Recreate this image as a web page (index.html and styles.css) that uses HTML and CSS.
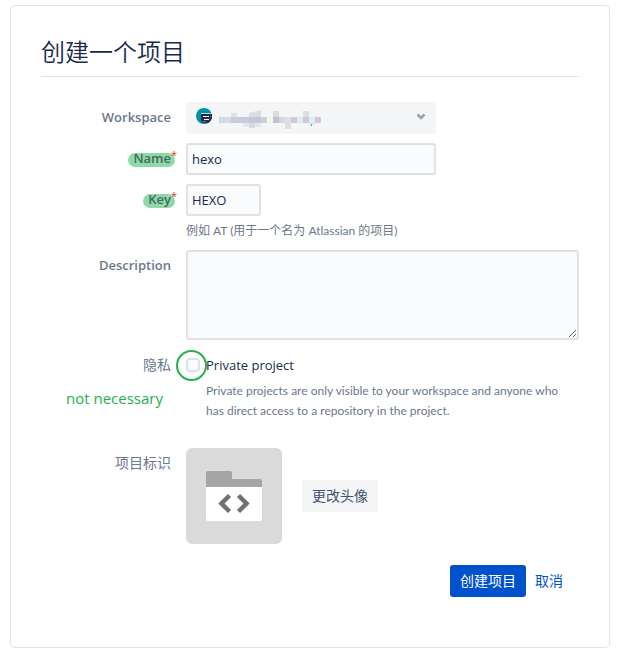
FILE: index.html
```html
<!DOCTYPE html>
<html lang="zh-CN">
<head>
<meta charset="utf-8">
<meta name="viewport" content="width=device-width, initial-scale=1">
<title>创建一个项目</title>
<link rel="stylesheet" href="styles.css">
</head>
<body>
<main class="card">
  <h1 class="title">创建一个项目</h1>
  <form class="form">
    <div class="row">
      <label class="label" for="workspace">Workspace</label>
      <div class="select-wrap">
        <select id="workspace" class="select"><option></option></select>
        <svg class="workspace" width="126" height="24" viewBox="0 0 126 24" aria-hidden="true">
          <circle cx="8" cy="9" r="8" fill="#0092a8"/>
          <path d="M5 6h11v4a8 8 0 0 1-4 6H7l-2-3z" fill="#1d2b50"/>
          <path d="M5 6h11v1H5z" fill="#c8d4e0"/>
          <path d="M7 9h6v1H7zM8 12h5v1H8z" fill="#fff"/>
          <path d="M14 9h1v1h-1zM7 14h3v1H7z" fill="#e0526b"/>
          <path d="M23 10h12v6H23z" fill="#d0dbea"/>
          <path d="M35 6h6v4h-6z" fill="#dde1ea"/>
          <path d="M35 10h12v6H35z" fill="#cbcbd6"/>
          <path d="M47 10h6v6h-6z" fill="#cbcbe0"/>
          <path d="M53 6l12-3v7H53z" fill="#dcdce2"/>
          <path d="M53 10h12v6H53z" fill="#c9c6d4"/>
          <path d="M65 10h6v6h-6z" fill="#c9d0da"/>
          <path d="M47 16h6v4h-6zM59 16h6v4h-6z" fill="#e8e4ec"/>
          <path d="M53 16h6v5h-6z" fill="#d3d8e7"/>
          <path d="M71 10h6v6h-6z" fill="#f3f5e8"/>
          <path d="M77 4h6v6h-6z" fill="#dcdce0"/>
          <path d="M77 10h6v6h-6z" fill="#b9c5d1"/>
          <path d="M83 10h6v6h-6z" fill="#d3d5df"/>
          <path d="M89 10h6v12h-6z" fill="#dfdde2"/>
          <path d="M95 10h6v6h-6z" fill="#cbcbd6"/>
          <path d="M101 10h6v6h-6z" fill="#deebf5"/>
          <path d="M107 4h6v6h-6z" fill="#dfdde4"/>
          <path d="M107 10h6v6h-6z" fill="#cbcbd6"/>
          <path d="M113 10h6v8h-6z" fill="#deebf5"/>
          <path d="M115 17h1v2h-1z" fill="#5f9a94"/>
          <path d="M119 10h6v6h-6z" fill="#cbcbd6"/>
        </svg>
        <svg class="chevron" width="10" height="8" viewBox="0 0 10 8" aria-hidden="true"><path d="M1.500 1.500L5 5l3.500-3.500" fill="none" stroke="#97a0af" stroke-width="2.500"/></svg>
      </div>
    </div>
    <div class="row">
      <label class="label" for="name"><span class="mark">Name</span><span class="required">*</span></label>
      <input id="name" class="field medium" type="text" value="hexo">
    </div>
    <div class="row">
      <label class="label" for="key"><span class="mark">Key</span><span class="required">*</span></label>
      <div>
        <input id="key" class="field short" type="text" value="HEXO">
        <p class="hint">例如 AT (用于一个名为 Atlassian 的项目)</p>
      </div>
    </div>
    <div class="row">
      <label class="label" for="description">Description</label>
      <textarea id="description" class="field area"></textarea>
    </div>
    <div class="row privacy">
      <div class="label plain">隐私<span class="note">not necessary</span></div>
      <div class="check">
        <span class="check-box"><input id="private" class="checkbox" type="checkbox"><span class="ring"></span></span>
        <div>
          <label class="check-label" for="private">Private project</label>
          <p class="help">Private projects are only visible to your workspace and anyone who has direct access to a repository in the project.</p>
        </div>
      </div>
    </div>
    <div class="row identity">
      <div class="label plain">项目标识</div>
      <div class="avatar-row">
        <svg class="avatar" width="96" height="96" viewBox="0 0 96 96" role="img" aria-label="项目标识">
          <rect width="96" height="96" rx="6" fill="#dadada"/>
          <path d="M20 39V25q0-2 2-2h22q2 0 2 2v6h28q2 0 2 2v6z" fill="#a5a5a5"/>
          <path d="M20 39h56v32q0 2-2 2H22q-2 0-2-2z" fill="#fff"/>
          <path d="M43.500 47.500L35.500 55.500l8 8M52.500 47.500l8 8-8 8" fill="none" stroke="#707070" stroke-width="4.500"/>
        </svg>
        <button class="button" type="button">更改头像</button>
      </div>
    </div>
    <div class="actions">
      <button class="button primary" type="submit">创建项目</button>
      <a class="cancel" href="#">取消</a>
    </div>
  </form>
</main>
</body>
</html>
```
FILE: styles.css
```css
* { box-sizing: border-box; }

body {
  margin: 0;
  padding: 5px 12px 6px 10px;
  background: #fff;
  color: #172b4d;
  font: 14px/20px "Open Sans", "Noto Sans CJK SC", sans-serif;
}

p { margin: 0; }

.card {
  padding: 30px 30px 50px;
  border: 1px solid #dfe1e6;
  border-radius: 5px;
}

.title {
  margin: 0;
  padding-bottom: 8px;
  border-bottom: 1px solid #dfe1e6;
  font-size: 24px;
  line-height: 32px;
  font-weight: 350;
}

.form {
  display: flex;
  flex-direction: column;
  gap: 9px;
  padding-top: 25px;
}

.row {
  display: grid;
  grid-template-columns: 130px minmax(0, 1fr);
  column-gap: 15px;
}

.label {
  position: relative;
  padding-top: 5px;
  color: #6b778c;
  font-size: 13px;
  font-weight: 600;
  text-align: right;
}

.plain {
  font-size: 14px;
  font-weight: 400;
}

.mark {
  display: inline-block;
  position: relative;
  z-index: 0;
  margin-right: -4px;
  padding: 0 4px 0 5px;
  color: #42695f;
}

.mark::before {
  content: "";
  position: absolute;
  inset: 5px 0 1px;
  z-index: -1;
  border-radius: 7px;
  background: #8fd9a8;
}

.required {
  position: absolute;
  top: 2px;
  left: 100%;
  color: #de350b;
  font-size: 11px;
  font-weight: 400;
}

.select-wrap {
  position: relative;
  max-width: 250px;
}

.select {
  display: block;
  width: 100%;
  height: 32px;
  border: 0;
  border-radius: 3px;
  appearance: none;
  background: #f4f5f7;
}

.workspace {
  position: absolute;
  top: 5px;
  left: 10px;
  pointer-events: none;
}

.chevron {
  position: absolute;
  top: 11px;
  right: 10px;
  pointer-events: none;
}

.field {
  display: block;
  width: 100%;
  height: 32px;
  margin: 0;
  padding: 3px 4px;
  border: 2px solid #dfe1e6;
  border-radius: 3px;
  background: #fafbfc;
  color: #172b4d;
  font: inherit;
  font-size: 13px;
}

.medium { max-width: 250px; }
.short { max-width: 75px; }
.area { height: 90px; }

.hint,
.help {
  color: #6b778c;
  font-family: Lato, "Noto Sans CJK SC", sans-serif;
  font-size: 12px;
}

.hint { padding-top: 5px; }
.help { padding-top: 6px; }

.privacy { padding-top: 1px; }

.note {
  position: absolute;
  top: 38px;
  right: 8px;
  color: #22b14c;
  font-size: 15px;
  white-space: nowrap;
}

.check {
  display: flex;
  gap: 6px;
  padding-top: 5px;
}

.check-box {
  position: relative;
  flex: none;
  height: 14px;
  margin-top: 3px;
}

.check-label {
  display: block;
  font-size: 13px;
}

.checkbox {
  display: block;
  width: 14px;
  height: 14px;
  margin: 0;
  border: 2px solid #dfe1e6;
  border-radius: 4px;
  appearance: none;
  background: #fafbfc;
}

.ring {
  position: absolute;
  inset: -8px -7px -9px -10px;
  border: 2px solid #22b14c;
  border-radius: 50%;
  pointer-events: none;
}

.identity { padding-top: 18px; }

.avatar-row {
  display: flex;
  align-items: center;
  gap: 20px;
}

.button {
  height: 32px;
  padding: 0 10px;
  border: 0;
  border-radius: 3px;
  background: #f4f5f7;
  color: #42526e;
  font: inherit;
}

.actions {
  display: flex;
  justify-content: flex-end;
  align-items: center;
  gap: 9px;
  padding: 12px 16px 0 0;
}

.primary {
  background: #0052cc;
  color: #fff;
}

.cancel {
  color: #0052cc;
  text-decoration: none;
}
```
